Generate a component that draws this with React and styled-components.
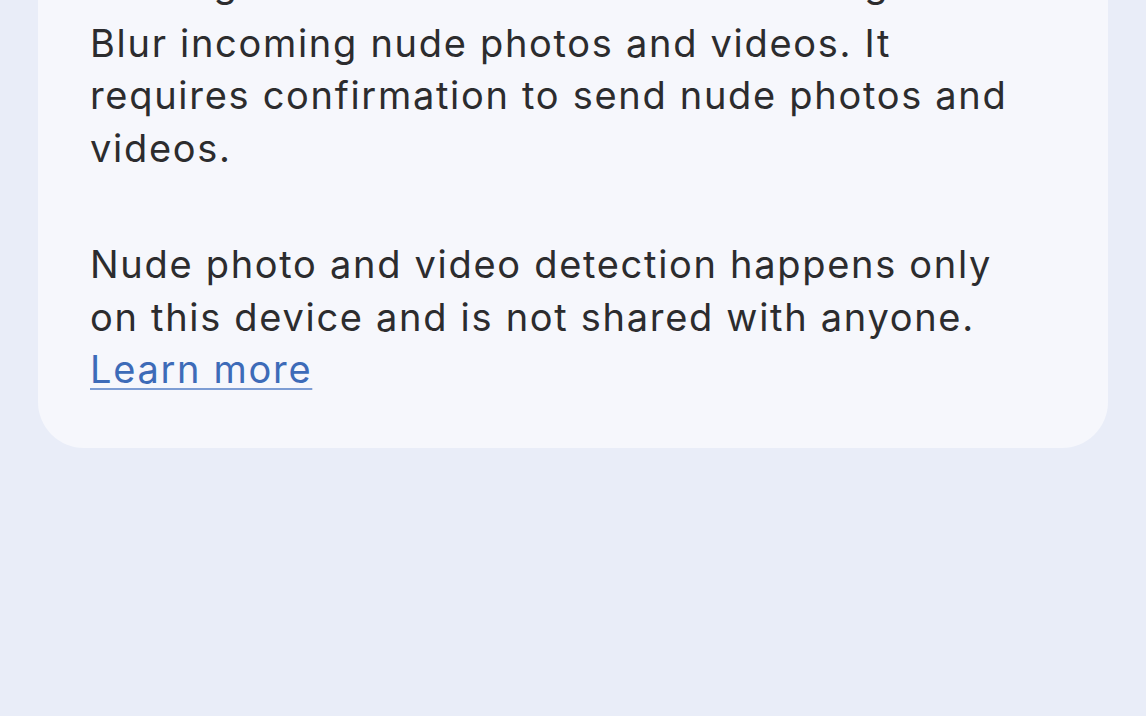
import styled, { createGlobalStyle } from "styled-components";

const GlobalStyle = createGlobalStyle`
    html, body {
        margin: 0;
        padding: 0;
        background: #e9edf8;
    }
    body {
        font-family: Inter, Roboto, "Liberation Sans", sans-serif;
        overflow: hidden;
    }
`

const Page = styled.div`
    width: 1146px;
    height: 716px;
    padding: 0 38px;
    box-sizing: border-box;
    background: #e9edf8;
    overflow: hidden;
`

const Card = styled.section`
    margin-top: -43px;
    background: #f6f7fc;
    border-radius: 0 0 46px 46px;
    padding: 0 52px 52px;
`

const Paragraph = styled.p`
    margin: ${props => props.gap ? '64px' : '0'} 0 0;
    font-size: 38px;
    line-height: 52.5px;
    letter-spacing: 1.7px;
    color: #2c2c2e;
    white-space: nowrap;
`

const Line = styled.span`
    display: block;
    margin-bottom: ${props => props.spaced ? '7px' : '0'};
`

const Link = styled.a`
    color: #3d6bb8;
    text-decoration: underline;
    text-decoration-color: #7d9dd4;
    text-decoration-thickness: 2px;
    text-underline-offset: 5px;
    cursor: pointer;
`

export default function App() {
    return (
        <Page>
            <GlobalStyle />
            <Card>
                <Paragraph>
                    <Line spaced>Turning this on will detect sensitive images and</Line>
                    <Line>Blur incoming nude photos and videos. It</Line>
                    <Line>requires confirmation to send nude photos and</Line>
                    <Line>videos.</Line>
                </Paragraph>
                <Paragraph gap>
                    <Line>Nude photo and video detection happens only</Line>
                    <Line>on this device and is not shared with anyone.</Line>
                    <Line><Link>Learn more</Link></Line>
                </Paragraph>
            </Card>
        </Page>
    )
}
